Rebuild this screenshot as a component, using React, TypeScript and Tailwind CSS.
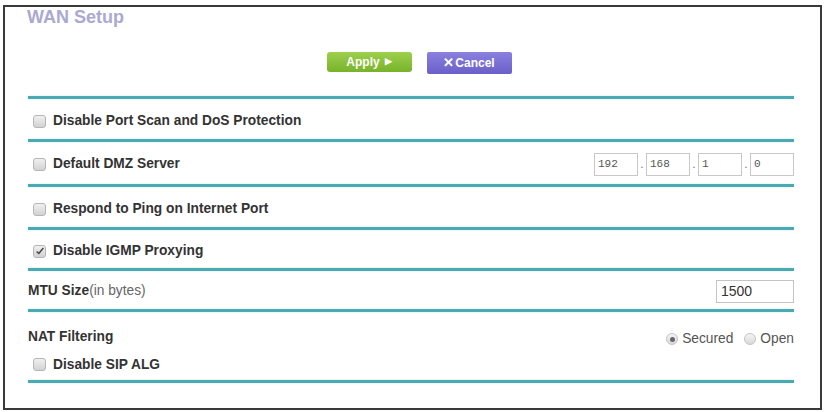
import React from 'react';

function Rule() {
  return <div className="h-[3px] bg-[#4ba9b3] shadow-[0_0_2px_#bfe6ea]" />;
}

function Box({ checked = false }: { checked?: boolean }) {
  return (
    <span className="relative inline-flex w-[13px] h-[13px] shrink-0 rounded-[3px] border border-[#b5b5b5] bg-gradient-to-b from-[#f0f0f0] to-[#d2d2d2]">
      {checked && (
        <svg viewBox="0 0 12 12" className="absolute left-[1px] top-[0px] w-[10px] h-[10px]">
          <path d="M2 6.5 L4.6 9 L10 2.5" fill="none" stroke="#444" strokeWidth="1.8" />
        </svg>
      )}
    </span>
  );
}

function Radio({ on = false }: { on?: boolean }) {
  return (
    <span className="relative inline-flex items-center justify-center w-[12px] h-[12px] rounded-full border border-[#c4c4c4] bg-gradient-to-b from-[#f5f5f5] to-[#d9d9d9]">
      {on && <span className="w-[5px] h-[5px] rounded-full bg-[#666]" />}
    </span>
  );
}

function CheckRow({ label, checked, height }: { label: string; checked?: boolean; height: string }) {
  return (
    <div className={`flex items-center gap-[7px] pl-[5px] pt-[4px] ${height}`}>
      <Box checked={checked} />
      <span className="font-bold text-[13.75px] text-[#333]">{label}</span>
    </div>
  );
}

export default function App() {
  const ip = ['192', '168', '1', '0'];
  return (
    <div className="w-[825px] h-[412px] bg-white pt-[5px] pl-[3px]" style={{ fontFamily: '"Liberation Sans", Arial, sans-serif' }}>
      <div className="w-[819px] h-[405px] border-[2px] border-[#3a3a3a] pl-[23px] pr-[26px]">
        <h1 className="text-[18px] leading-[21px] font-bold text-[#a9a9d2] -ml-[1px]">WAN Setup</h1>

        <div className="flex justify-center gap-[15px] mt-[24px] pl-[16px]">
          <button className="w-[85px] h-[20px] rounded-[3px] bg-gradient-to-b from-[#9dd04c] to-[#78b22a] text-white font-bold text-[12px] flex items-center justify-center gap-[5px]">
            Apply <span className="text-[9px]">▶</span>
          </button>
          <button className="w-[85px] h-[22px] rounded-[2px] bg-gradient-to-b from-[#8a80e0] to-[#6a5fc8] text-white font-bold text-[12px] flex items-center justify-center">
            <span className="text-[13px] mr-[1px]">✕</span>Cancel
          </button>
        </div>

        <div className="mt-[22px]">
          <Rule />
          <CheckRow label="Disable Port Scan and DoS Protection" height="h-[40px]" />
          <Rule />
          <div className="flex items-center justify-between h-[42px] pt-[2px]">
            <div className="flex items-center gap-[7px] pl-[5px]">
              <Box />
              <span className="font-bold text-[13.75px] text-[#333]">Default DMZ Server</span>
            </div>
            <div className="flex items-center gap-[1px]">
              {ip.map((v, i) => (
                <React.Fragment key={i}>
                  {i > 0 && <span className="text-[#777] text-[12px] w-[6px] text-center">.</span>}
                  <span
                    className="w-[44px] h-[23px] border border-[#c8c8c8] flex items-center pl-[3px] text-[11px] text-[#555]"
                    style={{ fontFamily: '"Liberation Mono", monospace' }}
                  >
                    {v}
                  </span>
                </React.Fragment>
              ))}
            </div>
          </div>
          <Rule />
          <CheckRow label="Respond to Ping on Internet Port" height="h-[40px]" />
          <Rule />
          <CheckRow label="Disable IGMP Proxying" checked height="h-[38px]" />
          <Rule />
          <div className="flex items-center justify-between h-[38px] pt-[3px]">
            <span className="text-[13.75px] text-[#333]">
              <span className="font-bold">MTU Size</span>
              <span className="text-[#666]">(in bytes)</span>
            </span>
            <span className="w-[78px] h-[23px] border border-[#c4c4c4] flex items-center pl-[4px] text-[14px] text-[#333]">1500</span>
          </div>
          <Rule />
          <div className="h-[68px] pt-[13px]">
            <div className="flex items-center justify-between">
              <span className="font-bold text-[13.75px] text-[#333]">NAT Filtering</span>
              <div className="flex items-center gap-[4px] text-[13.75px] text-[#555] mt-[4px]">
                <Radio on />
                <span>Secured</span>
                <span className="w-[3px]" />
                <Radio />
                <span>Open</span>
              </div>
            </div>
            <div className="flex items-center gap-[7px] pl-[5px] mt-[5px]">
              <Box />
              <span className="font-bold text-[13.75px] text-[#333]">Disable SIP ALG</span>
            </div>
          </div>
          <Rule />
        </div>
      </div>
    </div>
  );
}
